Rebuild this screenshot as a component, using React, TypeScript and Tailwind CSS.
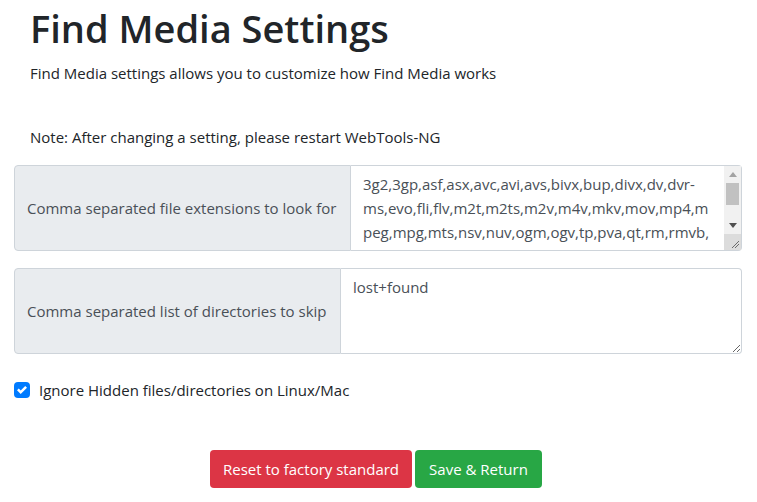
import React from 'react';

const EXTENSIONS =
  '3g2,3gp,asf,asx,avc,avi,avs,bivx,bup,divx,dv,dvr-ms,evo,fli,flv,m2t,m2ts,m2v,m4v,mkv,mov,mp4,mpeg,mpg,mts,nsv,nuv,ogm,ogv,tp,pva,qt,rm,rmvb,sdp,svq3,strm,ts,ty,vdr,viv,vp3,wm,wmv,wpl,wtv,vob,webm,ifo,iso,img,nrg,rec,udf,xvid,y4m,zip,rar';

// fake classic scrollbar, the headless browser only shows overlay ones
const Scrollbar = (): React.ReactElement => (
  <div className="absolute top-[1px] right-[1px] bottom-[1px] w-[17px] flex flex-col bg-[#f1f1f1]">
    <div className="h-[17px] flex items-center justify-center">
      <svg width="8" height="5" viewBox="0 0 8 5">
        <path d="M0 5L4 0L8 5Z" fill="#a3a3a3" />
      </svg>
    </div>
    <div className="flex-1 px-[2px]">
      <div className="h-[22px] bg-[#c1c1c1]" />
    </div>
    <div className="h-[17px] flex items-center justify-center">
      <svg width="8" height="5" viewBox="0 0 8 5">
        <path d="M0 0L8 0L4 5Z" fill="#505050" />
      </svg>
    </div>
    <div className="h-[16px] bg-[#dcdcdc] flex items-end justify-end p-[2px]">
      <svg width="8" height="8" viewBox="0 0 8 8">
        <path d="M1 8L8 1M4 8L8 4" stroke="#6b6b6b" strokeWidth="1" />
      </svg>
    </div>
  </div>
);

const SettingRow = ({
  label,
  value,
  labelWidth,
  scroll,
}: {
  label: string;
  value: string;
  labelWidth: string;
  scroll?: boolean;
}): React.ReactElement => {
  return (
    <div className="flex h-[86px] w-full">
      <div
        className={`${labelWidth} shrink-0 flex items-center px-3 bg-[#e9ecef] border border-[#ced4da] rounded-l text-[#495057] whitespace-nowrap`}
      >
        {label}
      </div>
      <div className="relative flex-1 min-w-0">
        <textarea
          rows={3}
          defaultValue={value}
          className={`block w-full h-[86px] pl-3 py-[6px] leading-6 border border-l-0 border-[#ced4da] rounded-r text-[#495057] bg-white outline-none ${
            scroll ? 'pr-[29px] overflow-hidden resize-none' : 'pr-3'
          }`}
        />
        {scroll && <Scrollbar />}
      </div>
    </div>
  );
};

const App = (): React.ReactElement => {
  return (
    <div className="w-[757px] min-h-[502px] bg-white text-[#212529] text-[15px] font-['Open_Sans',sans-serif]">
      <div className="px-[30px] pt-[4px]">
        <h1 className="text-[38px] leading-[48px] font-semibold">Find Media Settings</h1>
        <p className="mt-[9px] leading-6">Find Media settings allows you to customize how Find Media works</p>
        <p className="mt-[40px] leading-6">Note: After changing a setting, please restart WebTools-NG</p>
      </div>
      <div className="px-[14px] mt-[16px] flex flex-col gap-[17px] w-[756px]">
        <SettingRow label="Comma separated file extensions to look for" value={EXTENSIONS} labelWidth="w-[337px]" scroll />
        <SettingRow label="Comma separated list of directories to skip" value="lost+found" labelWidth="w-[327px]" />
      </div>
      <label className="flex items-center gap-[9px] px-[14px] mt-[24px]">
        <span className="w-4 h-4 rounded bg-[#007bff] flex items-center justify-center">
          <svg width="10" height="10" viewBox="0 0 8 8">
            <path fill="#fff" d="M6.564.75l-3.59 3.612-1.538-1.55L0 4.26 2.974 7.25 8 2.193z" />
          </svg>
        </span>
        <span className="leading-6">Ignore Hidden files/directories on Linux/Mac</span>
      </label>
      <div className="flex justify-center gap-[3px] mt-[48px] pr-[5px]">
        <button className="h-[38px] w-[202px] rounded bg-[#dc3545] text-white">Reset to factory standard</button>
        <button className="h-[38px] w-[127px] rounded bg-[#28a745] text-white">Save &amp; Return</button>
      </div>
    </div>
  );
};

export default App;
